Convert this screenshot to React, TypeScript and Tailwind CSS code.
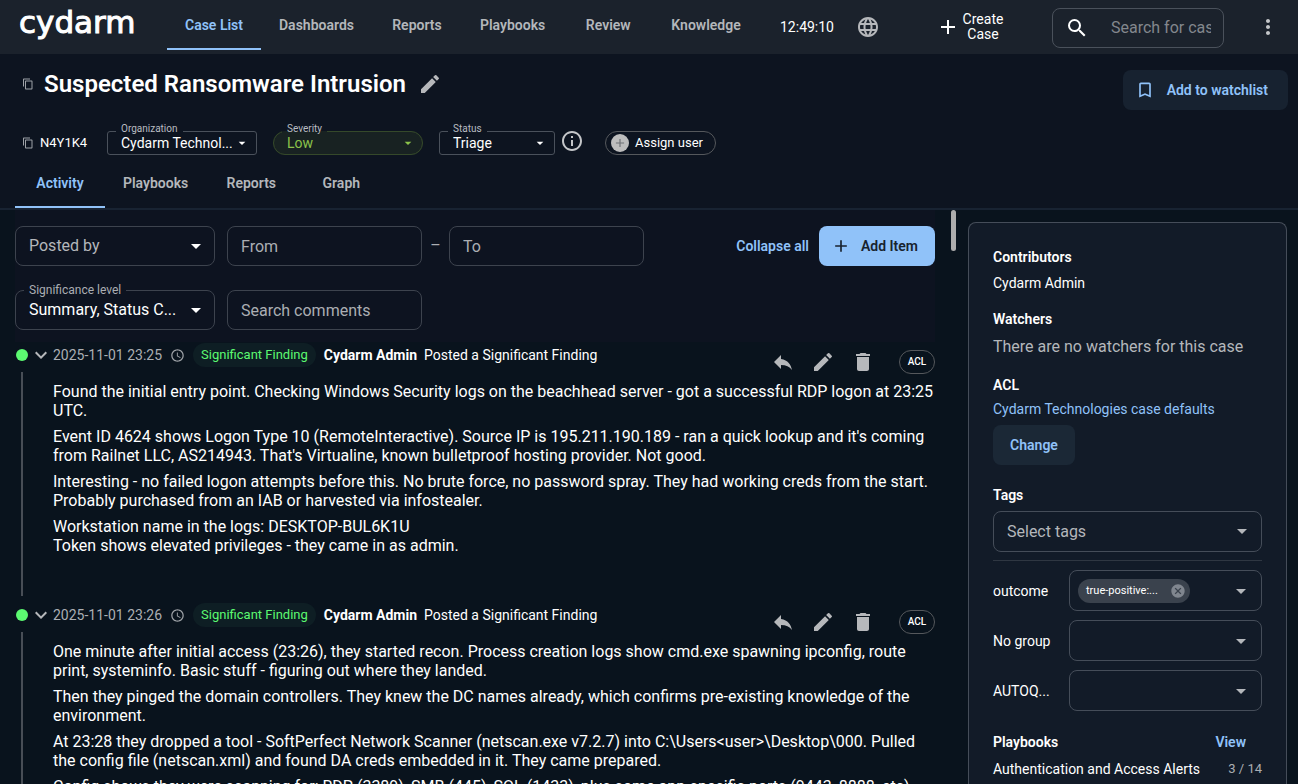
import { useState } from 'react';
import type { ReactNode } from 'react';
import clsx from 'clsx';
import {
    MdAccessTime,
    MdAdd,
    MdArrowDropDown,
    MdBookmarkBorder,
    MdCancel,
    MdContentCopy,
    MdDelete,
    MdEdit,
    MdExpandMore,
    MdInfoOutline,
    MdLanguage,
    MdMoreVert,
    MdReply,
    MdSearch,
} from 'react-icons/md';

const NAV = ['Case List', 'Dashboards', 'Reports', 'Playbooks', 'Review', 'Knowledge'];
const CASE_TABS = ['Activity', 'Playbooks', 'Reports', 'Graph'];

interface Comment {
    id: number;
    time: string;
    author: string;
    body: string[];
}

const COMMENTS: Comment[] = [
    {
        id: 1,
        time: '2025-11-01 23:25',
        author: 'Cydarm Admin',
        body: [
            'Found the initial entry point. Checking Windows Security logs on the beachhead server - got a successful RDP logon at 23:25 UTC.',
            "Event ID 4624 shows Logon Type 10 (RemoteInteractive). Source IP is 195.211.190.189 - ran a quick lookup and it's coming from Railnet LLC, AS214943. That's Virtualine, known bulletproof hosting provider. Not good.",
            'Interesting - no failed logon attempts before this. No brute force, no password spray. They had working creds from the start. Probably purchased from an IAB or harvested via infostealer.',
            'Workstation name in the logs: DESKTOP-BUL6K1U\nToken shows elevated privileges - they came in as admin.',
        ],
    },
    {
        id: 2,
        time: '2025-11-01 23:26',
        author: 'Cydarm Admin',
        body: [
            'One minute after initial access (23:26), they started recon. Process creation logs show cmd.exe spawning ipconfig, route print, systeminfo. Basic stuff - figuring out where they landed.',
            'Then they pinged the domain controllers. They knew the DC names already, which confirms pre-existing knowledge of the environment.',
            'At 23:28 they dropped a tool - SoftPerfect Network Scanner (netscan.exe v7.2.7) into C:\\Users<user>\\Desktop\\000. Pulled the config file (netscan.xml) and found DA creds embedded in it. They came prepared.',
            'Config shows they were scanning for: RDP (3389), SMB (445), SQL (1433), plus some app-specific ports (9443, 8888, etc).',
        ],
    },
];

interface TabsProps {
    items: string[];
    label: string;
}

function Tabs({ items, label }: TabsProps) {
    const [active, setActive] = useState(items[0]);

    return (
        <nav aria-label={label} className="flex">
            {items.map(item => (
                <button
                    key={item}
                    type="button"
                    onClick={() => setActive(item)}
                    className={clsx(
                        'h-12 min-w-[90px] px-[18px] border-b-2 text-sm font-semibold whitespace-nowrap',
                        active === item ? 'border-[#90c2f9] text-[#90c2f9]' : 'border-transparent text-[#b4b7bb]'
                    )}
                >
                    {item}
                </button>
            ))}
        </nav>
    );
}

interface MiniSelectProps {
    id: string;
    label: string;
    value: string;
    className: string;
    textClass?: string;
}

// Compact outlined select, the legend leaves a notch in the border
function MiniSelect({ id, label, value, className, textClass = 'text-white' }: MiniSelectProps) {
    return (
        <fieldset className={clsx('relative min-w-0 border', className)}>
            <legend className="ml-2 h-4 px-[5px] text-[10px] leading-3 text-[#b9bcc1]">
                <label htmlFor={id}>{label}</label>
            </legend>
            <select id={id} className={clsx('block -mt-[7px] h-[22px] w-full appearance-none bg-transparent pl-[13px] pr-6 text-sm leading-5 outline-none', textClass)}>
                <option>{value}</option>
            </select>
            <MdArrowDropDown size={16} className={clsx('pointer-events-none absolute right-1.5 bottom-[3px]', textClass)} />
        </fieldset>
    );
}

function IconButton({ label, children }: { label: string; children: ReactNode }) {
    return (
        <button type="button" aria-label={label} className="flex h-6 w-6 items-center justify-center text-[#b6b8bb]">
            {children}
        </button>
    );
}

function Header() {
    return (
        <header className="flex h-[54px] shrink-0 items-center bg-[#1b222c]">
            <a
                href="#"
                className="mb-2.5 w-[167px] shrink-0 pl-[19px] font-['DejaVu_Sans'] text-[31px] leading-8 text-white [-webkit-text-stroke:1px_white]"
            >
                cydarm
            </a>
            <div className="mb-0.5">
                <Tabs items={NAV} label="Main" />
            </div>
            <div className="ml-auto flex items-center">
                <time className="text-sm text-white">12:49:10</time>
                <button type="button" aria-label="Language" className="ml-[22px] text-[#b6b8bb]">
                    <MdLanguage size={24} />
                </button>
                <button type="button" className="ml-14 flex items-center gap-0.5 text-white">
                    <MdAdd size={24} />
                    <span className="w-[42px] text-sm leading-[15px]">Create Case</span>
                </button>
                <label className="mt-0.5 ml-12 flex h-10 w-[172px] items-center rounded-lg border border-[#4a515b] px-3">
                    <MdSearch size={24} className="shrink-0 text-white" />
                    <input
                        type="text"
                        aria-label="Search for cases"
                        placeholder="Search for cases"
                        className="ml-[22px] w-full min-w-0 bg-transparent text-base text-white outline-none placeholder:text-[#83878d]"
                    />
                </label>
                <button type="button" aria-label="More" className="mr-[18px] ml-8 text-[#c4c6c9]">
                    <MdMoreVert size={24} />
                </button>
            </div>
        </header>
    );
}

function CaseHeader() {
    return (
        <section className="shrink-0 border-b-2 border-[#182332] bg-[#0d1420]">
            <div className="flex items-start justify-between pt-4 pr-2.5 pl-[22px]">
                <div className="flex items-center">
                    <button type="button" aria-label="Copy title" className="text-[#9ea2a7]">
                        <MdContentCopy size={12} />
                    </button>
                    <h1 className="ml-2.5 text-2xl leading-7 font-semibold text-white">Suspected Ransomware Intrusion</h1>
                    <button type="button" aria-label="Edit title" className="ml-3 text-[#b6b8bb]">
                        <MdEdit size={24} />
                    </button>
                </div>
                <button type="button" className="flex h-10 items-center gap-3 rounded-lg bg-[#172230] pr-5 pl-3 text-sm font-semibold text-[#90c2f9]">
                    <MdBookmarkBorder size={20} />
                    Add to watchlist
                </button>
            </div>

            <div className="mt-[13px] flex items-end pl-[22px]">
                <div className="flex h-6 w-[85px] items-center gap-1.5 text-[13px] text-white">
                    <button type="button" aria-label="Copy case ID" className="text-[#9ea2a7]">
                        <MdContentCopy size={12} />
                    </button>
                    N4Y1K4
                </div>
                <div className="flex gap-4">
                    <MiniSelect id="organization" label="Organization" value="Cydarm Technol..." className="w-[150px] rounded-[3px] border-[#4a515b]" />
                    <MiniSelect
                        id="severity"
                        label="Severity"
                        value="Low"
                        className="w-[150px] rounded-full border-[#35492a] bg-[#182222]"
                        textClass="text-[#8bc34a]"
                    />
                    <MiniSelect id="status" label="Status" value="Triage" className="w-[116px] rounded-[3px] border-[#4a515b]" />
                </div>
                <button type="button" aria-label="Status info" className="mb-0.5 ml-[5px] text-[#c4c6c9]">
                    <MdInfoOutline size={24} />
                </button>
                <button type="button" className="ml-[21px] flex h-6 items-center gap-1.5 rounded-full border border-[#55585c] pr-3 pl-[5px] text-[13px] text-white">
                    <span className="flex h-[18px] w-[18px] items-center justify-center rounded-full bg-[#bdbdbd] text-[#6f7276]">
                        <MdAdd size={14} />
                    </span>
                    Assign user
                </button>
            </div>

            <div className="mt-[5px] pl-[15px]">
                <Tabs items={CASE_TABS} label="Case" />
            </div>
        </section>
    );
}

const fieldClass = 'h-10 rounded-lg border border-[#3d434e] bg-transparent px-[13px] text-base outline-none placeholder:text-[#abaeb3]';

function Filters() {
    return (
        <form className="bg-[#0d1320] pt-4">
            <div className="flex items-center">
                <div className="relative w-[200px]">
                    <select aria-label="Posted by" className={clsx(fieldClass, 'w-full appearance-none text-[#b4b7bb]')}>
                        <option>Posted by</option>
                    </select>
                    <MdArrowDropDown size={24} className="pointer-events-none absolute top-2 right-[7px] text-white" />
                </div>
                <input type="text" aria-label="From" placeholder="From" className={clsx(fieldClass, 'ml-3 w-[195px] text-white')} />
                <span className="w-[27px] text-center text-base text-[#abaeb3]">–</span>
                <input type="text" aria-label="To" placeholder="To" className={clsx(fieldClass, 'w-[195px] text-white')} />
                <button type="button" className="ml-auto text-sm font-semibold text-[#90c2f9]">
                    Collapse all
                </button>
                <button type="button" className="ml-2.5 flex h-10 items-center gap-2.5 rounded-lg bg-[#90c2f9] pr-[17px] pl-3 text-sm font-semibold text-[#18222e]">
                    <MdAdd size={20} />
                    Add Item
                </button>
            </div>

            <div className="mt-[17px] flex items-end gap-3 pb-3">
                <fieldset className="relative w-[200px] min-w-0 rounded-lg border border-[#3d434e]">
                    <legend className="ml-2 h-3.5 px-[5px] text-xs leading-[14px] text-[#abaeb3]">
                        <label htmlFor="significance">Significance level</label>
                    </legend>
                    <select id="significance" className="-mt-1.5 block h-[38px] w-full appearance-none bg-transparent pl-[13px] text-base text-white outline-none">
                        <option>Summary, Status C...</option>
                    </select>
                    <MdArrowDropDown size={24} className="pointer-events-none absolute right-1.5 bottom-[7px] text-white" />
                </fieldset>
                <input type="text" aria-label="Search comments" placeholder="Search comments" className={clsx(fieldClass, 'w-[195px] text-white')} />
            </div>
        </form>
    );
}

function CommentItem({ comment }: { comment: Comment }) {
    const [open, setOpen] = useState(true);

    return (
        <article className="mb-[7px]">
            <div className="flex h-6 items-center text-sm text-white">
                <span className="ml-px h-3 w-3 rounded-full bg-[#5cf971]" />
                <button type="button" aria-label="Toggle comment" onClick={() => setOpen(!open)} className="ml-px text-[#b6b8bb]">
                    <MdExpandMore size={24} />
                </button>
                <time className="text-[#abaeb3]">{comment.time}</time>
                <MdAccessTime size={15} className="ml-2 text-[#9ea2a7]" />
                <span className="ml-2 flex h-6 items-center rounded-full bg-[#0e1e24] px-2 text-[13px] text-[#5cf971]">Significant Finding</span>
                <strong className="ml-2 font-bold">{comment.author}</strong>
                <span className="ml-[7px]">Posted a Significant Finding</span>
                <div className="mt-3.5 ml-auto flex items-center gap-4">
                    <IconButton label="Reply">
                        <MdReply size={24} />
                    </IconButton>
                    <IconButton label="Edit">
                        <MdEdit size={24} />
                    </IconButton>
                    <IconButton label="Delete">
                        <MdDelete size={24} />
                    </IconButton>
                    <button type="button" className="ml-2 h-6 w-9 rounded-full border border-[#55585c] text-[10px] font-medium">
                        ACL
                    </button>
                </div>
            </div>

            {open && (
                <div className="mt-[5px] flex">
                    <div className="ml-1.5 w-0.5 shrink-0 bg-[#484e56]" />
                    <div className="ml-[30px] flex flex-col gap-[7px] pt-2.5 pb-[41px] text-base leading-[19px] text-white">
                        {comment.body.map(text => (
                            <p key={text} className="whitespace-pre-line">
                                {text}
                            </p>
                        ))}
                    </div>
                </div>
            )}
        </article>
    );
}

interface TagRowProps {
    id: string;
    label: string;
    children?: ReactNode;
}

function TagRow({ id, label, children }: TagRowProps) {
    return (
        <div className="flex items-center">
            <label htmlFor={id} className="w-[76px] shrink-0 text-sm">
                {label}
            </label>
            <div className="relative flex h-[41px] flex-1 items-center rounded-lg border border-[#454d59] pl-2">
                {children}
                <select id={id} className="h-full min-w-0 flex-1 appearance-none bg-transparent outline-none">
                    <option></option>
                </select>
                <MdArrowDropDown size={24} className="pointer-events-none absolute right-2 text-[#b4b7bb]" />
            </div>
        </div>
    );
}

function Sidebar() {
    return (
        <aside className="mt-3 mr-[11px] w-[319px] shrink-0 overflow-hidden rounded-t-lg border border-b-0 border-[#454d59] bg-[#121b28] p-6 text-sm leading-5 text-white">
            <h2 className="font-semibold">Contributors</h2>
            <p className="mt-1.5">Cydarm Admin</p>

            <h2 className="mt-4 font-semibold">Watchers</h2>
            <p className="mt-[7px] text-base leading-[22px] text-[#b4b7bb]">There are no watchers for this case</p>

            <h2 className="mt-[17px] font-semibold">ACL</h2>
            <a href="#" className="mt-1 block text-[#90c2f9]">
                Cydarm Technologies case defaults
            </a>
            <button type="button" className="mt-1.5 h-10 w-[82px] rounded-lg bg-[#1b2836] font-semibold text-[#90c2f9]">
                Change
            </button>

            <h2 className="mt-5 font-semibold">Tags</h2>
            <div className="relative mt-1.5">
                <select aria-label="Tags" className="block h-[41px] w-full appearance-none rounded-lg border border-[#454d59] bg-transparent px-[13px] text-base text-[#b4b7bb] outline-none">
                    <option>Select tags</option>
                </select>
                <MdArrowDropDown size={24} className="pointer-events-none absolute top-2 right-2 text-[#b4b7bb]" />
            </div>

            <div className="mt-2 flex flex-col gap-[9px] border-t border-[#2f3742] pt-[9px]">
                <TagRow id="tag-outcome" label="outcome">
                    <span className="flex h-6 items-center gap-3 rounded-full bg-[#3a424d] pr-1 pl-2 text-[11px]">
                        true-positive:...
                        <button type="button" aria-label="Remove tag" className="text-[#80868f]">
                            <MdCancel size={16} />
                        </button>
                    </span>
                </TagRow>
                <TagRow id="tag-none" label="No group" />
                <TagRow id="tag-autoq" label="AUTOQ..." />
            </div>

            <div className="mt-[21px] flex items-center justify-between pr-4">
                <h2 className="font-semibold">Playbooks</h2>
                <a href="#" className="font-semibold text-[#90c2f9]">
                    View
                </a>
            </div>
            <div className="mt-[7px] flex items-center justify-between whitespace-nowrap">
                <span>Authentication and Access Alerts</span>
                <span className="text-[13px] text-[#abaeb3]">3 / 14</span>
            </div>
        </aside>
    );
}

export default function App() {
    return (
        <div className="flex h-screen flex-col overflow-hidden bg-[#09131d] font-[Roboto,'Liberation_Sans',sans-serif]">
            <Header />
            <CaseHeader />
            <main className="flex min-h-0 flex-1">
                <div className="relative min-w-0 flex-1 overflow-hidden pr-[33px] pl-[15px]">
                    <Filters />
                    <div className="mt-px">
                        {COMMENTS.map(comment => (
                            <CommentItem key={comment.id} comment={comment} />
                        ))}
                    </div>
                    {/* Scrollbar thumb */}
                    <div className="absolute top-0 right-3 h-[41px] w-[5px] rounded-full bg-[#adadad]" />
                </div>
                <Sidebar />
            </main>
        </div>
    );
}
